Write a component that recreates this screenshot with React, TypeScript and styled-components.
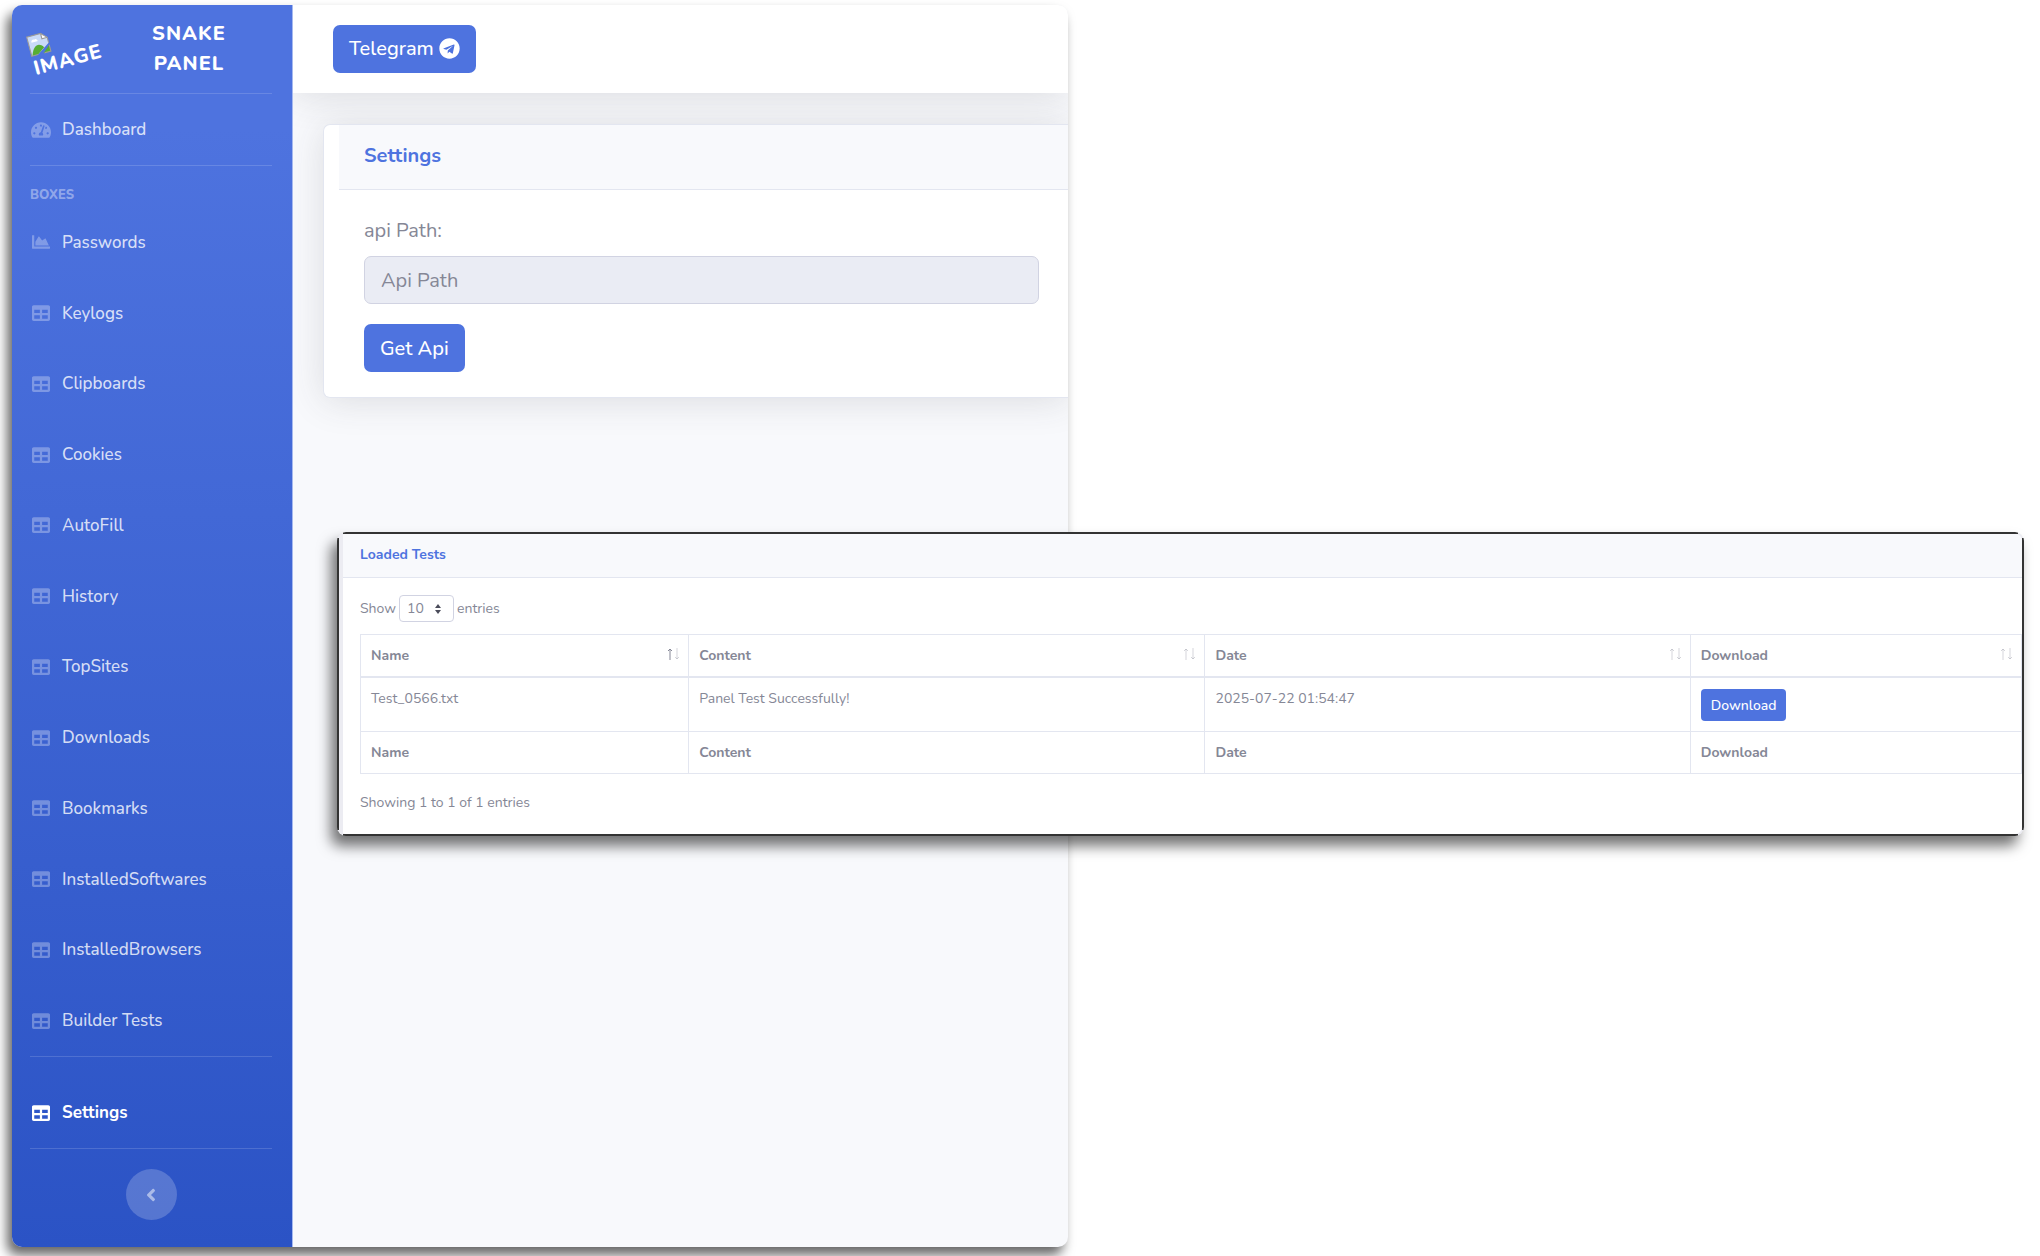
import React from "react";
import styled, { createGlobalStyle } from "styled-components";
import { FaAngleLeft, FaChartArea, FaTable, FaTachometerAlt, FaTelegram } from "react-icons/fa";

const font = `Nunito, Lato, "Open Sans", sans-serif`;

const GlobalStyle = createGlobalStyle`
  *, *::before, *::after { box-sizing: border-box; }
  body { margin: 0; background: #fff; font-family: ${font}; color: #858796; }
  button, input, select { font-family: inherit; margin: 0; }
  h1, h2, p, ul { margin: 0; padding: 0; }
`;

const Page = styled.div`
  position: relative;
  display: grid;
  grid-template-columns: 1056fr 972fr;
  min-height: 100vh;
  padding: 5px 0 9px 12px;
  overflow: hidden;
`;

const Panel = styled.div`
  display: flex;
  min-width: 0;
  border-radius: 10px;
  overflow: hidden;
  background: #f8f9fc;
  box-shadow: -5px 8px 12px rgba(0, 0, 0, 0.6);
`;

const Sidebar = styled.aside`
  display: flex;
  flex-direction: column;
  flex: none;
  width: 280px;
  padding: 0 20px 27px 18px;
  background: linear-gradient(180deg, #4e73df 10%, #2b53c5 100%);
`;

const Brand = styled.a`
  display: flex;
  align-items: center;
  height: 88px;
  color: #fff;
  font-size: 20px;
  font-weight: 800;
  line-height: 30px;
  letter-spacing: 1px;
  text-decoration: none;
  text-transform: uppercase;
`;

const BrandImage = styled.span`
  display: flex;
  flex-direction: column;
  width: 74px;
  line-height: 24px;
  transform: rotate(-15deg);
`;

const BrokenIcon = styled.svg`
  display: block;
  width: 22px;
  height: 22px;
`;

const BrandName = styled.span`
  flex: 1;
  padding: 0 36px 0 38px;
  text-align: center;
`;

const Divider = styled.hr`
  flex: none;
  width: 100%;
  height: 1px;
  margin: 0;
  border: 0;
  background: rgba(255, 255, 255, 0.15);
`;

const Heading = styled.h2`
  padding: 20px 0 2px;
  color: rgba(255, 255, 255, 0.4);
  font-size: 13px;
  font-weight: 800;
  line-height: 19px;
`;

const NavList = styled.ul<{ $grow?: boolean; $gap?: boolean }>`
  display: grid;
  grid-auto-rows: ${(p) => (p.$grow ? "minmax(50px, 1fr)" : "71px")};
  flex: ${(p) => (p.$grow ? "1" : "none")};
  padding-top: ${(p) => (p.$gap ? "20px" : "0")};
  list-style: none;
`;

const NavLink = styled.a<{ $active?: boolean }>`
  display: flex;
  align-items: center;
  gap: 10px;
  height: 100%;
  color: ${(p) => (p.$active ? "#fff" : "rgba(255, 255, 255, 0.8)")};
  font-size: 17px;
  font-weight: ${(p) => (p.$active ? 700 : 500)};
  line-height: 25px;
  text-decoration: none;

  svg {
    color: ${(p) => (p.$active ? "#fff" : "rgba(255, 255, 255, 0.3)")};
  }
`;

const IconBox = styled.span`
  display: flex;
  justify-content: center;
  flex: none;
  width: 22px;
`;

const Collapse = styled.button`
  display: flex;
  align-items: center;
  justify-content: center;
  align-self: center;
  width: 51px;
  height: 51px;
  margin-top: 20px;
  padding: 0;
  border: 0;
  border-radius: 50%;
  background: rgba(255, 255, 255, 0.2);
  color: rgba(255, 255, 255, 0.5);
`;

const Content = styled.main`
  flex: 1;
  min-width: 0;
  overflow: hidden;
  border-left: 1px solid #a6b9ef;
`;

const Topbar = styled.header`
  display: flex;
  align-items: center;
  height: 88px;
  padding: 0 40px 1px;
  background: #fff;
  box-shadow: 0 3px 36px rgba(58, 59, 69, 0.15);
`;

const Button = styled.button<{ $small?: boolean }>`
  display: inline-flex;
  align-items: center;
  gap: 5px;
  height: ${(p) => (p.$small ? "32px" : "48px")};
  padding: 0 ${(p) => (p.$small ? "10px" : "16px")};
  border: 0;
  border-radius: ${(p) => (p.$small ? "4px" : "7px")};
  background: #4e73df;
  color: #fff;
  font-size: ${(p) => (p.$small ? "14px" : "20px")};
  font-weight: 500;
`;

const SettingsCard = styled.section`
  margin: 31px 0 0 30px;
  padding-left: 15px;
  border: 1px solid #e3e6f0;
  border-right: 0;
  border-radius: 7px 0 0 7px;
  background: #fff;
  box-shadow: 0 3px 36px rgba(58, 59, 69, 0.15);
`;

const SettingsHeader = styled.h1`
  padding: 16px 25px 18px;
  border-bottom: 1px solid #e3e6f0;
  background: #f8f9fc;
  color: #4e73df;
  font-size: 20px;
  font-weight: 700;
  line-height: 30px;
`;

const SettingsForm = styled.form`
  display: flex;
  flex-direction: column;
  align-items: flex-start;
  padding: 25px 29px 25px 25px;
`;

const FieldLabel = styled.label`
  margin-bottom: 10px;
  font-size: 20px;
  line-height: 31px;
`;

const PathInput = styled.input`
  width: 100%;
  height: 48px;
  margin-bottom: 20px;
  padding: 0 16px;
  border: 1px solid #d1d3e2;
  border-radius: 7px;
  background: #eaecf4;
  font-size: 20px;

  &::placeholder {
    color: #858796;
    opacity: 1;
  }
`;

/* Dark edge lines stop short of the rounded corners, which stay light. */
const TestsCard = styled.section`
  position: absolute;
  top: 532px;
  left: 337px;
  right: 16px;
  border: 2px solid transparent;
  border-radius: 9px;
  overflow: hidden;
  background-color: #ececf2;
  background-image: linear-gradient(#333, #333), linear-gradient(#333, #333), linear-gradient(#333, #333),
    linear-gradient(#333, #333);
  background-origin: border-box;
  background-position: top, bottom, left, right;
  background-repeat: no-repeat;
  background-size: calc(100% - 12px) 2px, calc(100% - 12px) 2px, 2px calc(100% - 12px), 2px calc(100% - 12px);
  font-size: 14px;
  line-height: 20px;
  box-shadow: -6px 10px 14px rgba(0, 0, 0, 0.55);
`;

const TestsInner = styled.div`
  margin-left: 4px;
  background: #fff;
`;

const TestsHeader = styled.h2`
  padding: 11px 17px 12px;
  border-bottom: 1px solid #e3e6f0;
  background: #f8f9fc;
  color: #4e73df;
  font-size: 14px;
  font-weight: 700;
  line-height: 20px;
`;

const TestsBody = styled.div`
  padding: 17px 0 21px 17px;
`;

const LengthRow = styled.div`
  display: flex;
  align-items: center;
  gap: 3px;
  margin-bottom: 12px;
`;

const SelectWrap = styled.span`
  display: inline-grid;
  grid-template-columns: 35px 20px;
  align-items: center;

  svg {
    grid-area: 1 / 2;
    pointer-events: none;
  }
`;

const LengthSelect = styled.select`
  grid-area: 1 / 1 / 2 / 3;
  height: 27px;
  padding: 0 7px;
  border: 1px solid #d1d3e2;
  border-radius: 4px;
  appearance: none;
  background: transparent;
  color: #858796;
  font-size: 14px;
`;

const Table = styled.table`
  width: 100%;
  border: 1px solid #e3e6f0;
  border-collapse: collapse;
  table-layout: fixed;
`;

const Column = styled.col<{ $share: number }>`
  width: ${(p) => p.$share}%;
`;

const Cell = styled.td`
  padding: 11px 10px 10px;
  border: 1px solid #e3e6f0;
  text-align: left;
  vertical-align: top;
`;

const HeadCell = styled.th<{ $ruled?: boolean }>`
  padding: 11px 8px 10px 10px;
  border: 1px solid #e3e6f0;
  border-bottom-width: ${(p) => (p.$ruled ? "2px" : "1px")};
  font-weight: 700;
  text-align: left;
`;

const HeadInner = styled.span`
  display: flex;
  align-items: center;
  justify-content: space-between;

  svg {
    margin-bottom: 4px;
  }
`;

const Status = styled.p`
  padding-top: 19px;
`;

const boxes = [
  "Passwords",
  "Keylogs",
  "Clipboards",
  "Cookies",
  "AutoFill",
  "History",
  "TopSites",
  "Downloads",
  "Bookmarks",
  "InstalledSoftwares",
  "InstalledBrowsers",
  "Builder Tests",
];

const columns = [
  { name: "Name", weight: 328 },
  { name: "Content", weight: 516 },
  { name: "Date", weight: 485 },
  { name: "Download", weight: 331 },
];
const totalWeight = columns.reduce((sum, c) => sum + c.weight, 0);

function NavItem({ icon, label, active }: { icon: React.ReactNode; label: string; active?: boolean }) {
  return (
    <li>
      <NavLink href="#" $active={active}>
        <IconBox>{icon}</IconBox>
        {label}
      </NavLink>
    </li>
  );
}

function BrokenImage() {
  return (
    <BrokenIcon viewBox="0 0 20 20" aria-hidden="true">
      <path d="M1 1H14L19 6V11L7 19H1Z" fill="#c9daf8" />
      <path d="M2 18C5 10 10 8 14 14L7 19H2Z" fill="#57ad33" />
      <path d="M12 19L19 13V19Z" fill="#57ad33" />
      <path d="M4 6Q5 4 7 5Q9 4 10 7H4Z" fill="#fff" />
      <path d="M14 1V6H19Z" fill="#fff" />
      <path d="M19 11V6L14 1H1V19H7M14 1V6H19M13 19H19V13" fill="none" stroke="#9a9a9a" />
    </BrokenIcon>
  );
}

function SortArrows({ sorted }: { sorted?: boolean }) {
  return (
    <svg width="14" height="12" viewBox="0 0 14 12" fill="none" stroke="#858796" aria-hidden="true">
      <path d="M4 12V1M2 3L4 1L6 3" opacity={sorted ? 1 : 0.35} />
      <path d="M11 0V11M9 9L11 11L13 9" opacity={0.35} />
    </svg>
  );
}

export default function App() {
  return (
    <Page>
      <GlobalStyle />
      <Panel>
        <Sidebar>
          <Brand href="#">
            <BrandImage>
              <BrokenImage />
              Image
            </BrandImage>
            <BrandName>Snake Panel</BrandName>
          </Brand>
          <Divider />
          <NavList>
            <NavItem icon={<FaTachometerAlt size={20} />} label="Dashboard" />
          </NavList>
          <Divider />
          <Heading>BOXES</Heading>
          <NavList $grow>
            {boxes.map((label, i) => (
              <NavItem key={label} icon={i === 0 ? <FaChartArea size={18} /> : <FaTable size={18} />} label={label} />
            ))}
          </NavList>
          <Divider />
          <NavList $gap>
            <NavItem icon={<FaTable size={18} />} label="Settings" active />
          </NavList>
          <Divider />
          <Collapse type="button" aria-label="Collapse sidebar">
            <FaAngleLeft size={20} />
          </Collapse>
        </Sidebar>
        <Content>
          <Topbar>
            <Button type="button">
              Telegram <FaTelegram size={21} />
            </Button>
          </Topbar>
          <SettingsCard>
            <SettingsHeader>Settings</SettingsHeader>
            <SettingsForm>
              <FieldLabel htmlFor="api-path">api Path:</FieldLabel>
              <PathInput id="api-path" type="text" placeholder="Api Path" readOnly />
              <Button type="button">Get Api</Button>
            </SettingsForm>
          </SettingsCard>
        </Content>
      </Panel>
      <TestsCard>
        <TestsInner>
          <TestsHeader>Loaded Tests</TestsHeader>
          <TestsBody>
            <LengthRow>
              <label htmlFor="length">Show</label>
              <SelectWrap>
                <LengthSelect id="length" defaultValue="10">
                  <option>10</option>
                  <option>25</option>
                  <option>50</option>
                  <option>100</option>
                </LengthSelect>
                <svg width="8" height="10" viewBox="0 0 8 10" fill="#4a4c5a" aria-hidden="true">
                  <path d="M4 0L7 4H1ZM4 10L7 6H1Z" />
                </svg>
              </SelectWrap>
              <span>entries</span>
            </LengthRow>
            <Table>
              <colgroup>
                {columns.map((c) => (
                  <Column key={c.name} $share={(c.weight / totalWeight) * 100} />
                ))}
              </colgroup>
              <thead>
                <tr>
                  {columns.map((c, i) => (
                    <HeadCell key={c.name} scope="col" $ruled>
                      <HeadInner>
                        {c.name}
                        <SortArrows sorted={i === 0} />
                      </HeadInner>
                    </HeadCell>
                  ))}
                </tr>
              </thead>
              <tbody>
                <tr>
                  <Cell>Test_0566.txt</Cell>
                  <Cell>Panel Test Successfully!</Cell>
                  <Cell>2025-07-22 01:54:47</Cell>
                  <Cell>
                    <Button type="button" $small>
                      Download
                    </Button>
                  </Cell>
                </tr>
              </tbody>
              <tfoot>
                <tr>
                  {columns.map((c) => (
                    <HeadCell key={c.name}>{c.name}</HeadCell>
                  ))}
                </tr>
              </tfoot>
            </Table>
            <Status>Showing 1 to 1 of 1 entries</Status>
          </TestsBody>
        </TestsInner>
      </TestsCard>
    </Page>
  );
}
